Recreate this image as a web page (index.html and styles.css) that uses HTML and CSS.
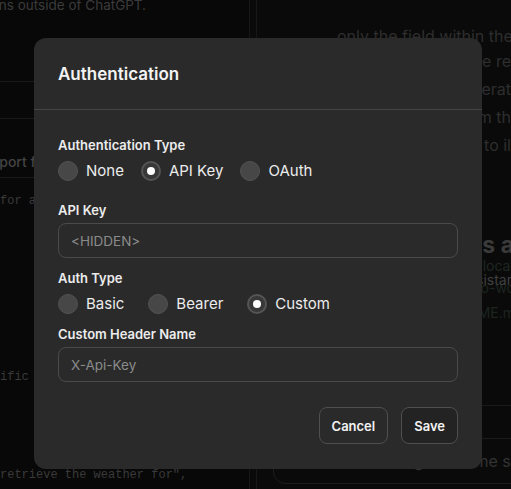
FILE: index.html
```html
<!DOCTYPE html>
<html>
<head>
<meta charset="utf-8">
<link rel="stylesheet" href="styles.css">
</head>
<body>
<div class="page">
  <div class="left">
    <div class="intro"><span>can be used to take actions outside of ChatGPT.</span></div>
    <div class="rule r1"></div>
    <div class="rule r2"></div>
    <div class="sect">Import from URL</div>
    <div class="rule r3"></div>
    <pre class="code c1">for a</pre>
    <pre class="code c2">ific</pre>
    <pre class="code c3">retrieve the weather for",</pre>
  </div>
  <div class="gutter"></div>
  <div class="right">
    <div class="para">
      <div class="line first">only the field within the schema</div>
      <div class="line"><span>the description will be re</span></div>
      <div class="line"><span>used during generat</span></div>
      <div class="line"><span>when retrieved from th</span></div>
      <div class="line"><span>and may be used to il</span></div>
    </div>
    <div class="rh"><span>Actions a</span></div>
    <div class="small g1"><span>allocat</span></div>
    <div class="small g2"><span>assistan</span></div>
    <div class="small g3"><span>auto-wo</span></div>
    <div class="small g4"><span>README.m</span></div>
    <div class="rule r4"></div>
    <div class="msgbox"><span>Send a message to some st</span></div>
  </div>
</div>

<div class="modal">
  <div class="modal-head">Authentication</div>
  <div class="modal-body">
    <div class="field first">
      <div class="label">Authentication Type</div>
      <div class="radios">
        <label class="radio"><span class="dot"></span>None</label>
        <label class="radio"><span class="dot on"></span>API Key</label>
        <label class="radio"><span class="dot"></span>OAuth</label>
      </div>
    </div>
    <div class="field">
      <div class="label">API Key</div>
      <input class="input" placeholder="&lt;HIDDEN&gt;">
    </div>
    <div class="field tight">
      <div class="label">Auth Type</div>
      <div class="radios wide">
        <label class="radio"><span class="dot"></span>Basic</label>
        <label class="radio"><span class="dot"></span>Bearer</label>
        <label class="radio"><span class="dot on"></span>Custom</label>
      </div>
    </div>
    <div class="field">
      <div class="label">Custom Header Name</div>
      <input class="input" placeholder="X-Api-Key">
    </div>
    <div class="actions">
      <button class="btn">Cancel</button>
      <button class="btn save">Save</button>
    </div>
  </div>
</div>
</body>
</html>
```
FILE: styles.css
```css
* { box-sizing: border-box; }
html, body { margin: 0; padding: 0; }
body {
  width: 511px;
  height: 489px;
  overflow: hidden;
  background: #090909;
  font-family: Inter, "Noto Sans", sans-serif;
  color: #ececec;
}
.page {
  display: flex;
  height: 489px;
}
.left {
  width: 250px;
  flex: none;
  overflow: hidden;
  background: #080808;
  border-right: 1px solid #171717;
}
.intro {
  width: 146px;
  height: 9px;
  display: flex;
  justify-content: flex-end;
  align-items: flex-end;
  white-space: nowrap;
  font-size: 13.5px;
  line-height: 18px;
  color: #3b3b3b;
}
.intro span { margin-bottom: -5px; }
.rule { height: 1px; background: #1a1a1a; }
.r1 { margin-top: 72px; }
.r2 { margin-top: 36px; }
.sect {
  margin: 34px 0 0 -17px;
  font-size: 14px;
  line-height: 18px;
  font-weight: 500;
  color: #444;
  white-space: nowrap;
}
.r3 { margin-top: 6px; }
.code {
  margin: 0;
  font-family: "Liberation Mono", monospace;
  font-size: 12px;
  line-height: 16px;
  color: #3a3a3a;
  white-space: pre;
}
.c1 { margin-top: 15px; }
.c2 { margin-top: 160px; }
.c3 { margin-top: 82px; }
.gutter {
  width: 7px;
  flex: none;
  background: #0a0a0a;
  border-right: 1px solid #171717;
}
.right {
  flex: 1;
  min-width: 0;
  overflow: hidden;
  background: #0a0a0a;
  padding-left: 80px;
}
.para {
  margin-top: 26px;
  font-size: 16px;
  line-height: 28px;
  color: #2e2e2e;
}
.line {
  height: 28px;
  display: flex;
  justify-content: flex-end;
  white-space: nowrap;
}
.line.first {
  height: 21px;
  line-height: 21px;
  justify-content: flex-start;
}
.rh {
  margin-top: 71px;
  height: 30px;
  display: flex;
  justify-content: flex-end;
  font-size: 23px;
  line-height: 30px;
  font-weight: 700;
  color: #3a3a3a;
  white-space: nowrap;
}
.rh span { margin-right: -3px; }
.small {
  height: 14px;
  display: flex;
  justify-content: flex-end;
  font-size: 14px;
  line-height: 14px;
  white-space: nowrap;
}
.small span { margin-right: -4px; }
.g1 { color: #1f2722; margin-top: -1px; }
.g2 { color: #404040; margin-top: 0; }
.g3 { color: #1c2620; margin-top: -6px; }
.g4 { color: #1c2520; margin-top: 11px; }
.r4 { margin-top: 85px; margin-left: 100px; }
.msgbox {
  margin: 32px -20px 0 -64px;
  height: 46px;
  border: 1px solid #1c1c1c;
  border-radius: 12px;
  display: flex;
  align-items: center;
  justify-content: flex-end;
  padding-right: 20px;
  font-size: 16px;
  color: #333;
  white-space: nowrap;
  overflow: hidden;
}
.msgbox span { margin-right: -6px; margin-top: 0; }

/* modal */
.modal {
  position: absolute;
  left: 34px;
  top: 38px;
  width: 448px;
  height: 431px;
  background: #2a2a2a;
  border-radius: 12px;
}
.modal-head {
  height: 72px;
  padding: 24px;
  font-size: 17px;
  line-height: 24px;
  font-weight: 600;
  color: #f3f3f3;
  border-bottom: 1px solid #444;
}
.modal-body {
  padding: 25px 24px 24px;
  display: flex;
  flex-direction: column;
}
.field { display: flex; flex-direction: column; gap: 3px; margin-bottom: 10px; }
.field.first { margin-bottom: 17px; gap: 4px; }
.field.tight { margin-bottom: 8px; }
.label {
  font-size: 13px;
  line-height: 20px;
  font-weight: 600;
  color: #ececec;
}
.radios { display: flex; gap: 17px; height: 24px; align-items: center; }
.radios.wide { gap: 24px; margin-top: 1px; }
.radio {
  display: flex;
  align-items: center;
  gap: 8px;
  font-size: 15px;
  line-height: 24px;
  color: #ececec;
}
.dot {
  width: 20px;
  height: 20px;
  border-radius: 50%;
  background: #474747;
  border: 1px solid #525252;
  display: flex;
  align-items: center;
  justify-content: center;
}
.dot.on {
  background: #383838;
  border: 2px solid #555;
}
.dot.on::after {
  content: "";
  width: 8px;
  height: 8px;
  border-radius: 50%;
  background: #fff;
}
.input {
  height: 35px;
  width: 400px;
  border: 1px solid #4a4a4a;
  border-radius: 8px;
  background: transparent;
  padding: 0 12px;
  font-family: Inter, "Noto Sans", sans-serif;
  font-size: 13.5px;
  color: #ececec;
  outline: none;
}
.input::placeholder { color: #8a8a8a; }
.actions {
  display: flex;
  justify-content: flex-end;
  gap: 13px;
  margin-top: 15px;
}
.btn {
  height: 37px;
  padding: 0 12px;
  border: 1px solid #4f4f4f;
  border-radius: 8px;
  background: #2a2a2a;
  color: #f3f3f3;
  font-family: Inter, "Noto Sans", sans-serif;
  font-size: 13px;
  font-weight: 600;
}
.btn.save { background: #232323; }
```
